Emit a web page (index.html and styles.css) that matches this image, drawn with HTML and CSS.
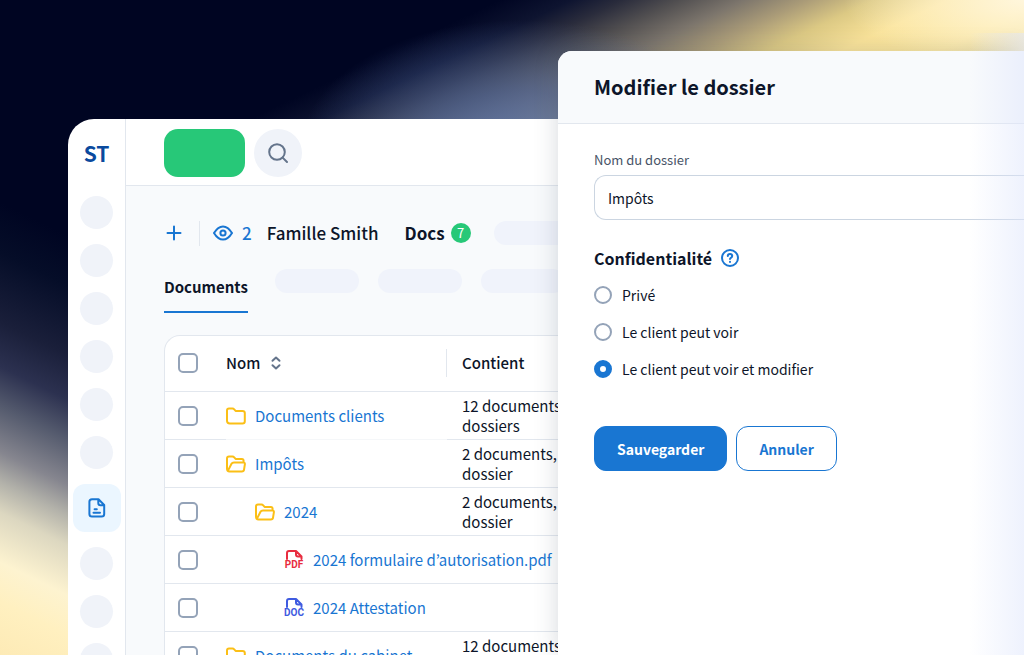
FILE: index.html
```html
<!DOCTYPE html>
<html lang="fr">
<head>
<meta charset="utf-8">
<title>Modifier le dossier</title>
<link rel="stylesheet" href="styles.css">
</head>
<body>
<svg class="sprite" aria-hidden="true">
  <symbol id="folder" viewBox="0 0 20 18"><path d="M1 3.5Q1 1.5 3 1.5H6.5Q7.5 1.5 8.2 2.3L9.6 3.9H16.5Q18.8 3.9 18.8 6V14.2Q18.8 16.4 16.5 16.4H3.8Q1 16.4 1 13.8Z"/></symbol>
  <symbol id="folder-open" viewBox="0 0 20 18"><path d="M17.6 7V5.8Q17.6 3.9 15.8 3.9H9.6L8.2 2.3Q7.5 1.5 6.5 1.5H3Q1 1.5 1 3.5V13.8Q1 16.4 3.5 16.4H15.8Q17.8 16.4 18 14.8L18.9 9.2Q19 7.4 17.4 7.4H8Q6.2 7.4 5.5 8.8L2 15.6"/></symbol>
  <symbol id="file" viewBox="0 0 20 10"><path d="M3 9V3Q3 1 5 1H12L17.5 6.5V9M12 1V4.5Q12 6.5 14 6.5H17.5"/></symbol>
</svg>
<div class="stage">
  <div class="app">
    <nav class="rail">
      <div class="logo">ST</div>
      <div class="rail-items">
        <span class="dot"></span><span class="dot"></span><span class="dot"></span><span class="dot"></span><span class="dot"></span><span class="dot"></span>
        <a class="rail-active" href="#" aria-label="Documents">
          <svg width="18" height="20" viewBox="0 0 18 20"><path d="M4 1.2H10.5L16.2 7V16Q16.2 18.6 13.6 18.6H4Q1.4 18.6 1.4 16V3.8Q1.4 1.2 4 1.2ZM10.3 1.4V5Q10.3 7.2 12.5 7.2H16M6.6 11.2H8.8M5.5 14.8H12"/></svg>
        </a>
        <span class="dot"></span><span class="dot"></span><span class="dot"></span>
      </div>
    </nav>
    <div class="workspace">
      <header class="topbar">
        <button class="create" aria-label="Créer"></button>
        <button class="search" aria-label="Rechercher"><svg width="22" height="22" viewBox="0 0 22 22"><circle cx="10" cy="10" r="7.8"/><path d="M15.6 15.6L20 20"/></svg></button>
      </header>
      <main class="content">
        <div class="client-bar">
          <button class="icon-button" aria-label="Ajouter"><svg width="16" height="16" viewBox="0 0 16 16"><path d="M8 1.5V14.5M1.5 8H14.5"/></svg></button>
          <span class="divider"></span>
          <span class="views"><svg width="20" height="16" viewBox="0 0 20 16"><path d="M1 8Q5 1.4 10 1.4T19 8Q15 14.6 10 14.6T1 8Z"/><circle cx="10" cy="8" r="2.6"/></svg>2</span>
          <span class="client">Famille Smith</span>
          <span class="docs">Docs <span class="badge">7</span></span>
          <span class="pill"></span>
        </div>
        <div class="tabs">
          <a class="tab" href="#">Documents</a>
          <span class="pill"></span><span class="pill"></span><span class="pill"></span>
        </div>
        <table class="files">
          <thead>
            <tr>
              <th class="check"><input type="checkbox" aria-label="Tout sélectionner"></th>
              <th class="name"><div class="head">Nom <svg width="12" height="14" viewBox="0 0 12 14"><path d="M2.5 4.8L6 1.5L9.5 4.8M2.5 9.2L6 12.5L9.5 9.2"/></svg></div></th>
              <th class="count">Contient</th>
            </tr>
          </thead>
          <tbody>
            <tr>
              <td class="check"><input type="checkbox" aria-label="Documents clients"></td>
              <td class="name"><a href="#" class="entry"><svg class="folder"><use href="#folder"/></svg>Documents clients</a></td>
              <td class="count">12 documents<br>dossiers</td>
            </tr>
            <tr>
              <td class="check"><input type="checkbox" aria-label="Impôts"></td>
              <td class="name faint"><a href="#" class="entry"><svg class="folder"><use href="#folder-open"/></svg>Impôts</a></td>
              <td class="count">2 documents,<br>dossier</td>
            </tr>
            <tr>
              <td class="check"><input type="checkbox" aria-label="2024"></td>
              <td class="name"><a href="#" class="entry level-1"><svg class="folder"><use href="#folder-open"/></svg>2024</a></td>
              <td class="count">2 documents,<br>dossier</td>
            </tr>
            <tr>
              <td class="check"><input type="checkbox" aria-label="2024 formulaire d’autorisation.pdf"></td>
              <td class="name"><a href="#" class="entry level-2"><span class="file pdf"><svg><use href="#file"/></svg><b>PDF</b></span>2024 formulaire d’autorisation.pdf</a></td>
              <td class="count"></td>
            </tr>
            <tr>
              <td class="check"><input type="checkbox" aria-label="2024 Attestation"></td>
              <td class="name"><a href="#" class="entry level-2"><span class="file doc"><svg><use href="#file"/></svg><b>DOC</b></span>2024 Attestation</a></td>
              <td class="count"></td>
            </tr>
            <tr>
              <td class="check"><input type="checkbox" aria-label="Documents du cabinet"></td>
              <td class="name"><a href="#" class="entry"><svg class="folder"><use href="#folder"/></svg>Documents du cabinet</a></td>
              <td class="count">12 documents<br>dossiers</td>
            </tr>
          </tbody>
        </table>
      </main>
    </div>
  </div>
  <form class="dialog">
    <h1>Modifier le dossier</h1>
    <div class="dialog-body">
      <label class="field-label" for="folder-name">Nom du dossier</label>
      <input class="field" id="folder-name" type="text" value="Impôts">
      <fieldset>
        <legend>Confidentialité <svg width="18" height="18" viewBox="0 0 18 18"><circle cx="9" cy="9" r="8"/><path d="M6.8 7Q6.8 4.9 9 4.9T11.2 6.9Q11.2 8.1 9.9 8.8Q9 9.3 9 10M9 12.8V13"/></svg></legend>
        <label class="option"><input type="radio" name="privacy">Privé</label>
        <label class="option"><input type="radio" name="privacy">Le client peut voir</label>
        <label class="option"><input type="radio" name="privacy" checked>Le client peut voir et modifier</label>
      </fieldset>
      <div class="actions">
        <button type="button" class="primary">Sauvegarder</button>
        <button type="button" class="secondary">Annuler</button>
      </div>
    </div>
  </form>
  <div class="edge-fade"></div>
</div>
</body>
</html>
```
FILE: styles.css
```css
* { box-sizing: border-box; }

body {
  margin: 0;
  font-family: "Noto Sans CJK KR", "Noto Sans", sans-serif;
  font-size: 15px;
  line-height: 20px;
  color: #0d1529;
}

button, input { font: inherit; color: inherit; }
button { cursor: pointer; }
a { color: #1976d2; text-decoration: none; }
svg { flex: none; fill: none; stroke: currentColor; stroke-width: 2; stroke-linecap: round; stroke-linejoin: round; }
.sprite { position: absolute; width: 0; height: 0; }

.stage {
  position: relative;
  height: 100vh;
  overflow: hidden;
  padding: 119px 0 0 68px;
  background:
    linear-gradient(206deg, #000522 220px, #050d28 265px, #1a1f3a 328px, #2c3150 368px, #555b6e 404px, #86868f 445px, #b3b2aa 472px, #dcd7c0 499px, #fdf3d0 544px, #fff0c0 580px, #fdeab5 629px) 0 0 / 88px 100% no-repeat,
    radial-gradient(180px 70px at 1024px 0, #fff6dc, #fff6dc00),
    radial-gradient(220px 130px at 520px 150px, #5570a8dd, #4a649f99 45%, #4a649f00),
    linear-gradient(154.5deg, #000522 215px, #0e1430 246px, #2a2c3c 268px, #504e50 292px, #7c756c 320px, #ab9c78 348px, #dcc984 376px, #fbe49a 408px, #fde8a0 450px, #f0e0a4 480px);
  background-color: #000522;
}

.app {
  display: flex;
  min-height: 100%;
  border-radius: 26px 0 0 0;
  background: #fff;
  overflow: hidden;
}

.rail { flex: none; width: 58px; border-right: 1px solid #e2e7ee; }
.logo { padding-top: 21px; text-align: center; font-size: 21px; line-height: 26px; font-weight: 700; color: #0a4a9e; }
.rail-items { display: flex; flex-direction: column; align-items: center; gap: 15px; padding-top: 30px; }
.dot { flex: none; width: 33px; height: 33px; border-radius: 50%; background: #f0f3f9; }
.rail-active { display: grid; place-items: center; width: 48px; height: 48px; border-radius: 12px; background: #ebf6ff; }

.workspace { flex: 1; min-width: 0; background: #f8fafc; }
.topbar { display: flex; align-items: center; gap: 9px; height: 67px; padding: 2px 0 0 38px; background: #fff; border-bottom: 1px solid #e2e7ee; }
.create { width: 81px; height: 48px; border: 0; border-radius: 14px; background: #27c878; }
.search { display: grid; place-items: center; width: 48px; height: 48px; padding: 0; border: 0; border-radius: 50%; background: #f0f3f9; color: #64748b; }

.content { padding: 34px 0 0 38px; }
.client-bar { display: flex; align-items: center; height: 26px; font-size: 17px; font-weight: 500; white-space: nowrap; }
.icon-button { display: grid; place-items: center; width: 20px; height: 20px; padding: 0; border: 0; background: none; color: #1976d2; }
.divider { width: 1px; height: 25px; margin: 0 13px 0 15px; background: #e2e7ee; }
.views { display: flex; align-items: center; gap: 9px; color: #1976d2; }
.client { margin-left: 15px; }
.docs { display: flex; align-items: center; gap: 6px; margin: 0 23px 0 26px; font-weight: 700; }
.badge { display: grid; place-items: center; width: 20px; height: 20px; border-radius: 50%; background: #27c878; color: #fff; font-size: 13px; line-height: 20px; font-weight: 400; }
.pill { flex: none; width: 84px; height: 24px; border-radius: 12px; background: #f0f3fb; }
.tabs { display: flex; gap: 19px; height: 44px; margin-top: 23px; }
.tab { margin-right: 8px; padding-top: 8px; border-bottom: 2px solid #1976d2; font-weight: 700; color: #0d1529; }

.files { width: 100%; margin-top: 22px; border: 1px solid #e2e7ee; border-right: 0; border-radius: 16px 0 0 0; border-spacing: 0; table-layout: fixed; background: #fff; }
.files th { height: 55px; padding: 0 0 1px; text-align: left; font-weight: 500; }
.files td { height: 48px; padding: 0; border-top: 1px solid #e2e7ee; white-space: nowrap; }
.files td.faint { border-top-color: #f5f7f9; }
.files .check { width: 61px; padding-left: 13px; }
.files .name { width: 221px; }
.files .count { padding-left: 15px; }
.head { display: flex; align-items: center; gap: 10px; height: 28px; border-right: 1px solid #e2e7ee; }
.head svg { color: #64748b; }
.entry { display: flex; align-items: center; gap: 9px; }
.level-1 { padding-left: 29px; }
.level-2 { padding-left: 58px; }
.folder { width: 20px; height: 18px; color: #fbbf16; }
.file { display: flex; flex-direction: column; align-items: center; width: 20px; }
.file svg { width: 20px; height: 10px; }
.file b { font: 700 10px/10px Roboto, sans-serif; }
.pdf { color: #e82d3f; }
.doc { color: #3f5be0; }

input[type="checkbox"], input[type="radio"] { appearance: none; display: block; flex: none; margin: 0; background: #fff; border: 2px solid #94a3b8; }
input[type="checkbox"] { width: 20px; height: 20px; border-radius: 5px; }
input[type="radio"] { width: 18px; height: 18px; border-radius: 50%; }
input[type="radio"]:checked { border: 6px solid #1976d2; }

.dialog {
  position: absolute;
  top: 51px;
  right: 0;
  bottom: 0;
  left: 558px;
  border-radius: 14px 0 0 0;
  background: #fff;
  box-shadow: 0 0 24px #33415533;
}
.dialog h1 { margin: 0; padding: 22px 36px; border-bottom: 1px solid #e2e7ee; border-radius: 14px 0 0 0; background: #f8fafc; font-size: 20px; line-height: 28px; font-weight: 700; }
.dialog-body { padding: 26px 0 0 36px; }
.field-label { display: block; font-size: 13px; color: #475467; }
.field { display: block; width: 100%; height: 45px; margin-top: 5px; padding: 0 13px; border: 1px solid #cbd5e1; border-right: 0; border-radius: 12px 0 0 12px; background: #fff; font-size: 14px; }
fieldset { margin: 26px 0 0; padding: 0; border: 0; }
legend { display: flex; align-items: center; gap: 9px; padding: 0; font-size: 16px; line-height: 24px; font-weight: 700; }
legend svg { color: #1976d2; }
.option { display: flex; align-items: center; gap: 10px; margin-top: 17px; font-size: 14px; }
legend + .option { margin-top: 15px; }
.actions { display: flex; gap: 9px; margin-top: 47px; }
.actions button { height: 45px; padding: 0 22px; border: 1px solid #1976d2; border-radius: 12px; font-size: 14px; font-weight: 700; }
.primary { background: #1976d2; color: #fff; }
.actions .secondary { background: #fff; color: #1976d2; }

.edge-fade { position: absolute; top: 33px; right: 0; bottom: 0; width: 54px; background: linear-gradient(90deg, #dfe6fc00, #dfe6fc88); pointer-events: none; }
```
